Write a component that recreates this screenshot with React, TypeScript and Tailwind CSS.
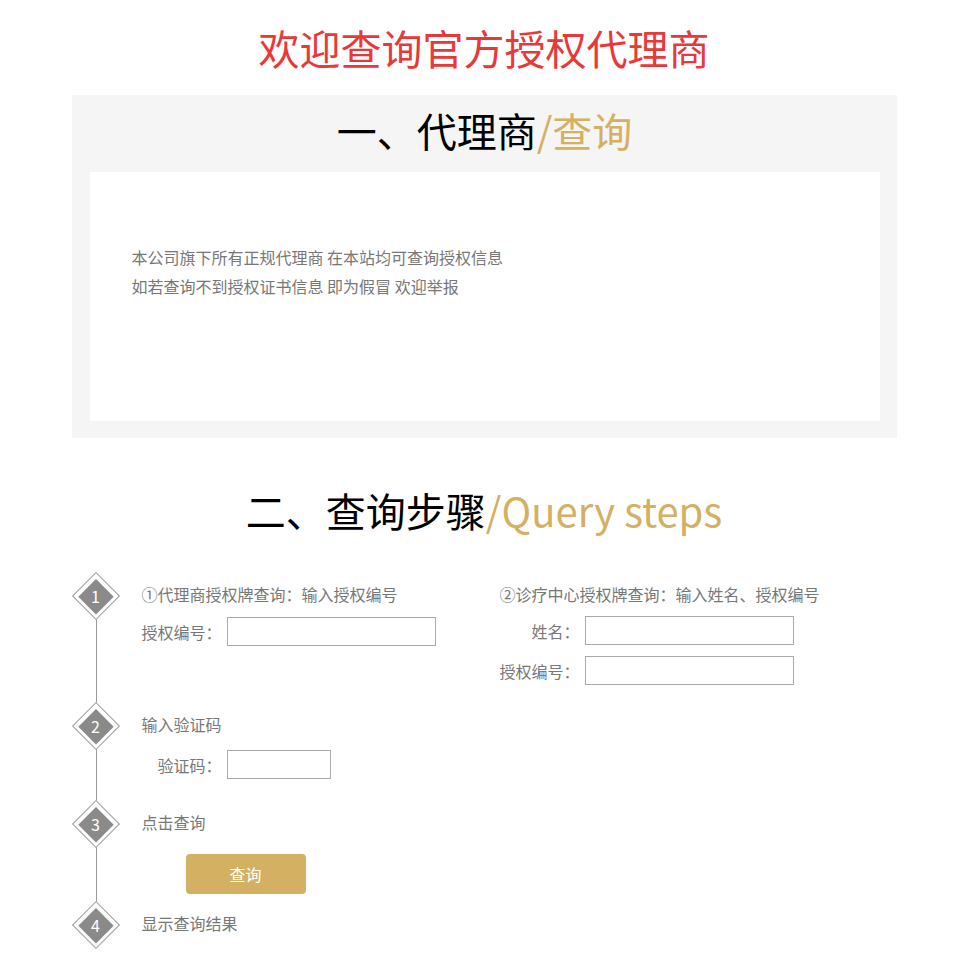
import React from 'react';

const font = { fontFamily: '"Microsoft YaHei", "Noto Sans CJK SC", "Noto Sans", sans-serif' };

const Diamond = ({ n }: { n: number }) => (
    <div className="relative w-[48px] h-[48px] flex items-center justify-center shrink-0">
        <div className="w-[34px] h-[34px] rotate-45 border border-[#9a9a9a] bg-white flex items-center justify-center">
            <div className="w-[25px] h-[25px] bg-[#8a8a8a]" />
        </div>
        <span className="absolute inset-0 flex items-center justify-center text-white text-[16px]">{n}</span>
    </div>
);

const Field = ({ label, width }: { label: string; width: string }) => (
    <div className="flex items-center">
        <label className="w-[80px] text-right text-[16px] leading-6">{label}</label>
        <input className={`${width} h-[29px] ml-[5px] border border-[#aaa] outline-none px-2`} type="text" />
    </div>
);

const App = () => {
    return (
        <div className="bg-white min-h-screen pt-[16px] pb-8" style={font}>
            <h1 className="text-center text-[41px] leading-[63px] text-[#e8393a]">欢迎查询官方授权代理商</h1>

            <div className="w-[825px] mx-auto mt-[16px] bg-[#f5f5f5] pt-[5px] pb-[17px] pl-[18px] pr-[17px]">
                <h2 className="text-center text-[40px] leading-[60px] text-black">
                    一、代理商<span className="text-[#d4b062]">/查询</span>
                </h2>
                <div className="mt-[12px] bg-white h-[249px] pt-[71px] pl-[42px] text-[16px] leading-[29px] text-[#777]">
                    <p>本公司旗下所有正规代理商 在本站均可查询授权信息</p>
                    <p>如若查询不到授权证书信息 即为假冒 欢迎举报</p>
                </div>
            </div>

            <h2 className="mt-[44px] text-center text-[40px] leading-[56px] text-black">
                二、查询步骤<span className="text-[#d4b062]">/Query steps</span>
            </h2>

            <div className="relative w-[825px] mx-auto mt-[34px] text-[#777] text-[16px]">
                <div className="absolute left-[24px] top-[24px] bottom-[24px] w-px bg-[#9a9a9a]" />

                {/* step 1 */}
                <div className="relative flex">
                    <Diamond n={1} />
                    <div className="ml-[22px] pt-[10px] flex">
                        <div className="w-[358px]">
                            <p className="leading-6">①代理商授权牌查询：输入授权编号</p>
                            <div className="mt-[11px] flex items-center">
                                <label className="leading-6">授权编号：</label>
                                <input className="w-[209px] h-[29px] ml-[5px] border border-[#aaa] outline-none px-2" type="text" />
                            </div>
                        </div>
                        <div>
                            <p className="leading-6">②诊疗中心授权牌查询：输入姓名、授权编号</p>
                            <div className="mt-[10px] flex flex-col gap-[11px]">
                                <Field label="姓名：" width="w-[209px]" />
                                <Field label="授权编号：" width="w-[209px]" />
                            </div>
                        </div>
                    </div>
                </div>

                {/* step 2 */}
                <div className="relative flex mt-[17px]">
                    <Diamond n={2} />
                    <div className="ml-[22px] pt-[10px]">
                        <p className="leading-6">输入验证码</p>
                        <div className="mt-[14px] flex items-center">
                            <label className="w-[80px] text-right leading-6">验证码：</label>
                            <input className="w-[104px] h-[29px] ml-[5px] border border-[#aaa] outline-none px-2" type="text" />
                        </div>
                    </div>
                </div>

                {/* step 3 */}
                <div className="relative flex mt-[21px]">
                    <Diamond n={3} />
                    <div className="ml-[22px] pt-[10px]">
                        <p className="leading-6">点击查询</p>
                        <button className="mt-[20px] ml-[44px] w-[120px] h-[40px] rounded bg-[#d4b062] text-white text-[16px]">查询</button>
                    </div>
                </div>

                {/* step 4 */}
                <div className="relative flex mt-[7px]">
                    <Diamond n={4} />
                    <div className="ml-[22px] pt-[10px]">
                        <p className="leading-6">显示查询结果</p>
                    </div>
                </div>
            </div>
        </div>
    );
};

export default App;
